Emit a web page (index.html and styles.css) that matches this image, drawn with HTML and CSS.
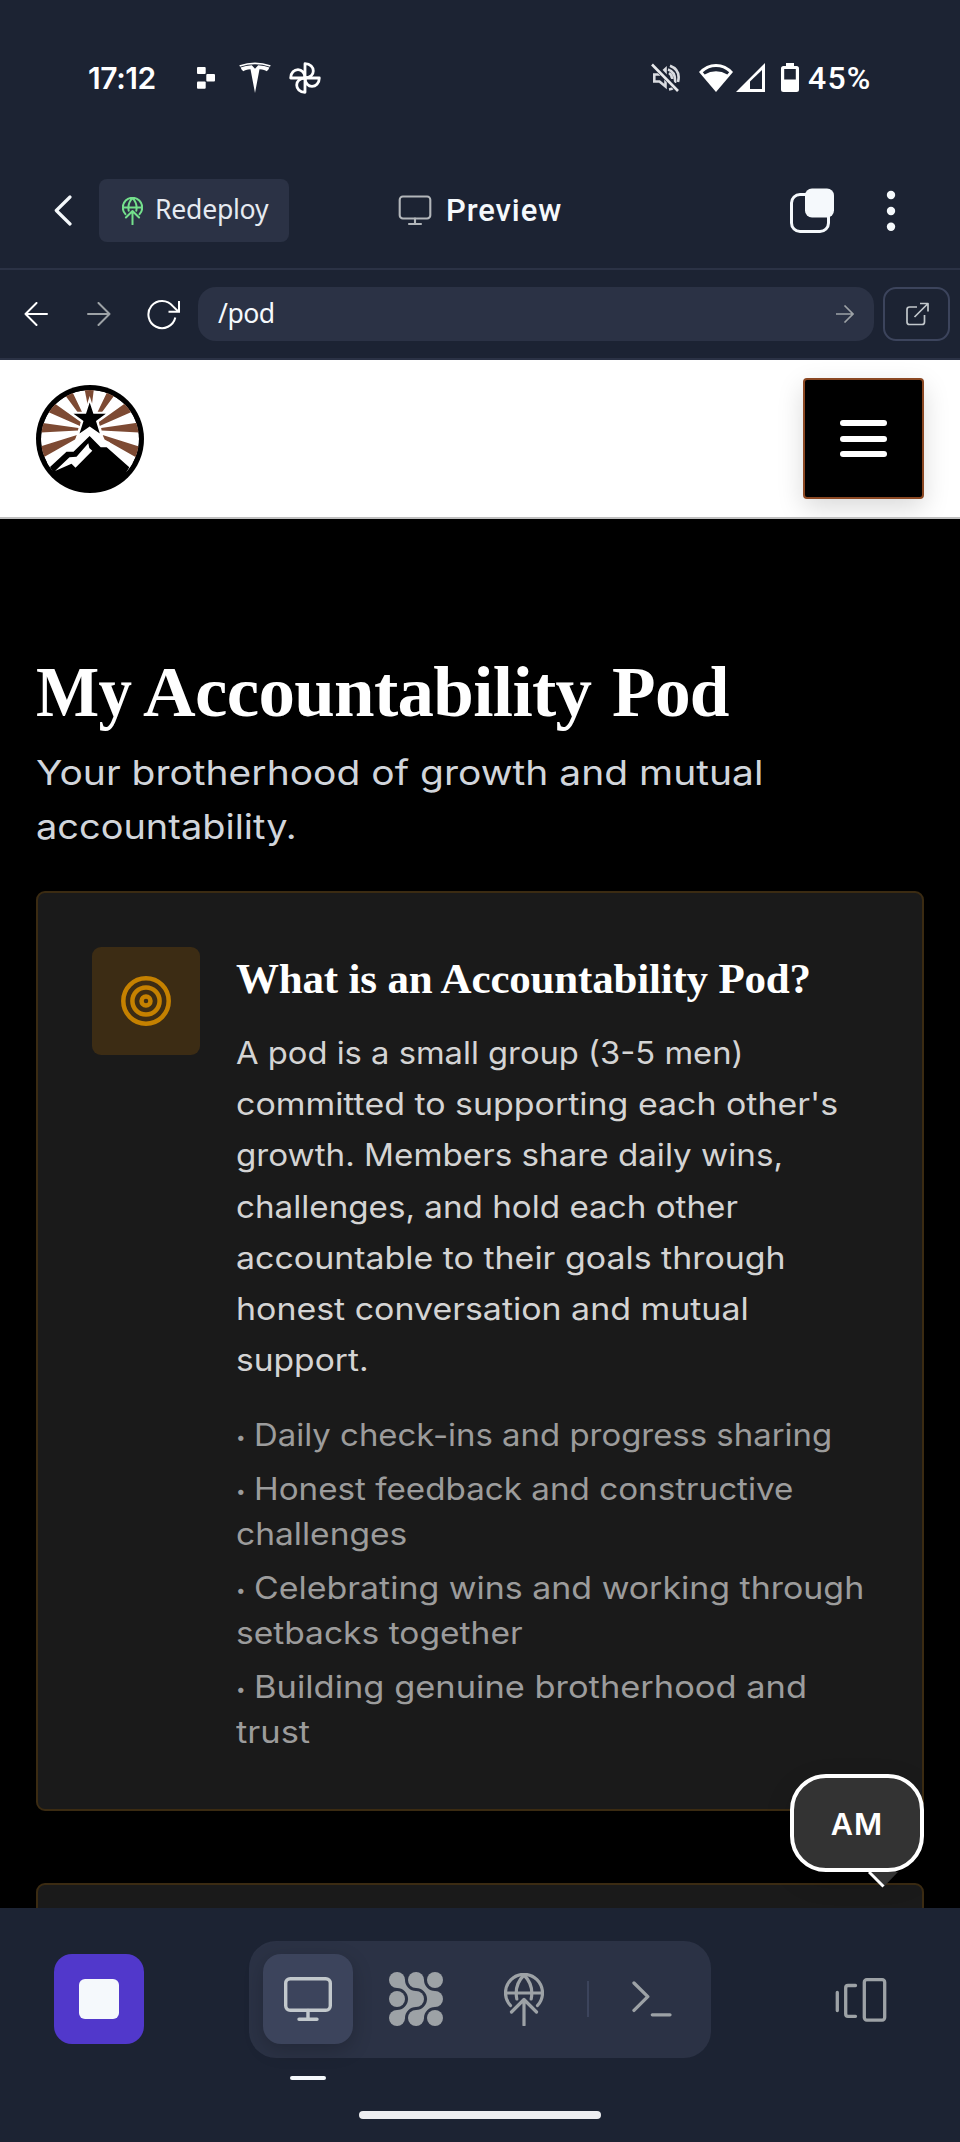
FILE: index.html
```html
<!DOCTYPE html>
<html lang="en">
<head>
<meta charset="utf-8">
<title>Preview</title>
<link rel="stylesheet" href="styles.css">
</head>
<body>
<div class="phone">
  <div class="status">
    <span class="clock">17:12</span>
    <svg class="st-blocks" width="18" height="22" viewBox="0 0 18 22" fill="#fff"><rect width="8.7" height="7" rx="1"/><rect x="9.3" y="7" width="8.7" height="7.4" rx="1"/><rect y="14.4" width="8.7" height="7.4" rx="1"/></svg>
    <svg class="st-tesla" width="32" height="31" viewBox="0 0 32 31" fill="#fff"><path d="M.3 3.2Q16-2.2 31.7 3.200L31 4.700Q16-.2 1 4.700Z"/><path d="M1.600 5.600Q6.500 3.500 12.800 3.300L16 6.800 19.200 3.300Q25.500 3.500 30.400 5.600 29.600 8.300 27.400 9.200 26 7.600 20.500 7.300L16 31 11.500 7.300Q6 7.600 4.600 9.200 2.400 8.300 1.600 5.600Z"/></svg>
    <svg class="st-pin" width="32" height="32" viewBox="0 0 32 32" fill="none" stroke="#fff" stroke-width="2.800" stroke-linejoin="round"><path id="blade" d="M16 16V1.700C21.500 1.700 24.300 5.400 24.300 9 24.300 12.500 21.500 16 16 16Z"/><use href="#blade" transform="rotate(90 16 16)"/><use href="#blade" transform="rotate(180 16 16)"/><use href="#blade" transform="rotate(270 16 16)"/></svg>
    <svg class="st-mute" width="30" height="30" viewBox="0 0 30 30" fill="none" stroke="#d9dbe0" stroke-width="2.600"><path d="M3.300 11.500H8.500L14.500 6V23.500L8.500 18.500H3.300Z"/><path d="M18 10Q21 12 21 16M17 6.500Q25 9 24 20M19 2.800Q30 7 27 19M18 26.500Q21 26 23 24.500"/><path d="M2.500 1.500 28 28" stroke="#1c2333" stroke-width="5.500"/><path d="M1 1.500 27 28" stroke="#e8e9ec" stroke-width="2.600"/></svg>
    <svg class="st-wifi" width="34" height="28" viewBox="0 0 34 28" fill="#fff"><path d="M17 28 0 8Q7 0 17 0T34 8Z"/><path d="M3.800 8.300Q9.500 3 17 3T30.200 8.300L28.300 10.500Q23 7.300 17 7.300T5.700 10.500Z" fill="#1c2333"/></svg>
    <svg class="st-signal" width="29" height="29" viewBox="0 0 29 29"><path d="M29 0V29H0Z" fill="#fff"/><path d="M26 7V26H14V18.500Z" fill="#1c2333"/></svg>
    <svg class="st-batt" width="18" height="29" viewBox="0 0 18 29"><path d="M5 0H13V3H15.500Q18 3 18 5.500V26.500Q18 29 15.500 29H2.500Q0 29 0 26.500V5.500Q0 3 2.500 3H5Z" fill="#fff"/><path d="M3.200 6H14.800V16.500H3.200Z" fill="#1c2333"/></svg>
    <span class="percent">45%</span>
  </div>

  <div class="appbar">
    <svg width="18" height="31" viewBox="0 0 18 31" fill="none" stroke="#f5f9fc" stroke-width="3.200" stroke-linecap="round" stroke-linejoin="round"><path d="M16 2 2.300 15.500 16 29"/></svg>
    <div class="redeploy">
      <svg width="21" height="28" viewBox="0 0 40 53" fill="none" stroke="#74e08c" stroke-width="3.800" stroke-linecap="round" stroke-linejoin="round"><path d="M6.500 32.500A18.500 18.500 0 1 1 33.500 32.500M1.500 20H38.500M12.800 26Q10 12 20 2 30 12 27.200 26M20 26.500V52M7.500 39 20 26.500 32.500 39"/></svg>
      <span>Redeploy</span>
    </div>
    <div class="page-name">
      <svg width="34" height="31" viewBox="0 0 34 31" fill="none" stroke="#b2b6ba" stroke-width="2.100" stroke-linecap="round"><rect x="1.700" y="1.500" width="30.600" height="22" rx="3.200"/><path d="M17 23.500V29M11 29H23"/></svg>
      <span>Preview</span>
    </div>
    <svg class="tabs" width="46" height="46" viewBox="0 0 46 46"><rect x="2.500" y="6.500" width="37" height="37" rx="8.500" fill="none" stroke="#f5f9fc" stroke-width="3"/><rect x="16" y=".5" width="29" height="29" rx="7" fill="#f5f9fc"/></svg>
    <svg class="dots" width="10" height="42" viewBox="0 0 10 42" fill="#f5f9fc"><circle cx="5" cy="5" r="4.200"/><circle cx="5" cy="21" r="4.200"/><circle cx="5" cy="36.800" r="4.200"/></svg>
  </div>

  <div class="urlbar">
    <svg width="24" height="24" viewBox="0 0 24 24" fill="none" stroke="#fff" stroke-width="2" stroke-linecap="round" stroke-linejoin="round"><path d="M23 12H1.500M12.500 1 1.500 12 12.500 23"/></svg>
    <svg class="fwd" width="24" height="24" viewBox="0 0 24 24" fill="none" stroke="#9da2a6" stroke-width="2" stroke-linecap="round" stroke-linejoin="round"><path d="M1 12H22.500M11.500 1 22.500 12 11.500 23"/></svg>
    <svg class="reload" width="33" height="31" viewBox="0 0 33 31" fill="none" stroke="#fff" stroke-width="2"><path d="M28.300 18.500A13.600 13.600 0 1 1 25.800 7.200L31 12.300"/><path d="M32 2V12.800H21.500"/></svg>
    <div class="field">
      <span>/pod</span>
      <svg width="18" height="18" viewBox="0 0 18 18" fill="none" stroke="#9da2a6" stroke-width="1.600"><path d="M0 9H17M8.500.5 17 9 8.500 17.500"/></svg>
    </div>
    <div class="external">
      <svg width="24" height="24" viewBox="0 0 24 24" fill="none" stroke="#c2c8cc" stroke-width="1.700" stroke-linejoin="round"><path d="M12 5H4.500Q2 5 2 7.500V20Q2 22.500 4.500 22.500H17Q19.500 22.500 19.500 20V13M15 1.500H23V9.500M23 1.500 9.500 15"/></svg>
    </div>
  </div>

  <div class="site">
    <header class="site-head">
      <svg width="108" height="108" viewBox="0 0 108 108">
        <defs><clipPath id="disc"><circle cx="54" cy="54" r="49"/></clipPath></defs>
        <circle cx="54" cy="54" r="54"/>
        <g clip-path="url(#disc)">
          <circle cx="54" cy="54" r="49" fill="#fff"/>
          <g fill="#7d4a33">
            <path d="M48.300 3H58L56 19H51.500Z"/>
            <g id="rays"><path d="M26 6 35 4 46 27H41.500ZM11 26.500 18 18 44.700 37 44 41ZM3 47.600 4 37.500 42.500 43 42 45.500ZM3 75 3 62 41 50 39 54.500Z"/></g>
            <use href="#rays" transform="translate(107.600 0) scale(-1 1)"/>
          </g>
          <path d="M10 86 30.500 66.700H37.500L53.600 51 64.700 62.300H70.700L97 86" fill="none" stroke="#fff" stroke-width="11"/>
          <path d="M53.700 17.500 57.400 28.800H69.800L60 36 63.800 48.500 53.700 41.500 43.500 48.500 47.500 36 37.500 28.800H50Z" fill="#000" stroke="#fff" stroke-width="4" paint-order="stroke"/>
          <path d="M53.600 42.500 66 54 60 60 53.600 53 47 59 41 54Z" fill="#fff"/>
        </g>
        <path d="M14 82 30.500 66.700H37.500L53.600 51 64.700 62.300H70.700L93.300 82.300 84 98 54 106 22 96Z"/>
        <path d="M52.300 58.300 53.300 63 56.300 65.800 39.500 82.700 35.500 78.700 19 86 33.500 72.300 40.500 71.700Z" fill="#fff"/>
      </svg>
      <div class="menu"><i></i><i></i><i></i></div>
    </header>

    <main class="content">
      <h1><span class="w1">My</span> <span class="w2">Accountability</span> <span class="w3">Pod</span></h1>
      <p class="lead"><span class="x13">Your brotherhood of growth and mutual</span><br><span class="x10">accountability.</span></p>

      <section class="card">
        <div class="card-icon">
          <svg width="50" height="50" viewBox="0 0 50 50" fill="none" stroke="#c58100" stroke-width="4.500"><circle cx="25" cy="25" r="22.700"/><circle cx="25" cy="25" r="13.600"/><circle cx="25" cy="25" r="4.500"/></svg>
        </div>
        <div class="card-body">
          <h2>What is an Accountability Pod?</h2>
          <p class="about">
            <span class="x7">A pod is a small group (3-5 men)</span><br>
            <span class="x11">committed to supporting each other's</span><br>
            <span class="x9">growth. Members share daily wins,</span><br>
            <span class="x9">challenges, and hold each other</span><br>
            <span class="x11">accountable to their goals through</span><br>
            <span class="x11">honest conversation and mutual</span><br>
            <span class="x10">support.</span>
          </p>
          <ul>
            <li><b>•</b><span class="x8">Daily check-ins and progress sharing</span></li>
            <li><b>•</b><span class="x9">Honest feedback and constructive</span><br><span class="x10">challenges</span></li>
            <li><b>•</b><span class="x11">Celebrating wins and working through</span><br><span class="x10">setbacks together</span></li>
            <li><b>•</b><span class="x12">Building genuine brotherhood and</span><br><span class="x13">trust</span></li>
          </ul>
        </div>
      </section>
      <section class="card next"></section>
    </main>
  </div>

  <div class="dock">
    <div class="dock-row">
      <div class="stop"><i></i></div>
      <div class="tools">
        <div class="tool active">
          <svg width="48" height="44" viewBox="0 0 48 44" fill="none" stroke="#c2c8cc" stroke-width="3.400" stroke-linecap="round"><rect x="1.700" y="1.700" width="44.600" height="31.600" rx="4.500"/><path d="M24 33.500V42M15 42.200H33"/></svg>
        </div>
        <div class="tool">
          <svg width="54" height="54" viewBox="0 0 54 54" fill="#9da2a6"><circle cx="8" cy="8" r="8"/><circle cx="27" cy="8" r="8"/><circle cx="46" cy="8" r="8"/><circle cx="8" cy="27" r="8"/><circle cx="27" cy="27" r="8"/><circle cx="46" cy="27" r="8"/><circle cx="8" cy="46" r="8"/><circle cx="27" cy="46" r="8"/><circle cx="46" cy="46" r="8"/><path id="link" d="M8 0L16 8A11 11 0 0 0 27 19L19 27A11 11 0 0 0 8 16Z"/><use href="#link" x="19"/><g transform="translate(0 54) scale(1 -1)"><use href="#link"/><use href="#link" x="19"/></g></svg>
        </div>
        <div class="tool">
          <svg width="40" height="53" viewBox="0 0 40 53" fill="none" stroke="#9da2a6" stroke-width="3.200" stroke-linecap="round" stroke-linejoin="round"><path d="M6.500 32.500A18.500 18.500 0 1 1 33.500 32.500M1.500 20H38.500M12.800 26Q10 12 20 2 30 12 27.200 26M20 26.500V52M7.500 39 20 26.500 32.500 39"/></svg>
        </div>
        <div class="rule"></div>
        <div class="tool">
          <svg width="40" height="36" viewBox="0 0 40 36" fill="none" stroke="#9da2a6" stroke-width="3.300" stroke-linecap="round" stroke-linejoin="round"><path d="M2 2 15.800 15.700 2 29.400M20.300 33.800H38"/></svg>
        </div>
      </div>
      <svg class="panes" width="52" height="44" viewBox="0 0 52 44" fill="none" stroke="#9da2a6" stroke-width="3.300" stroke-linecap="round"><path d="M2.300 14.500V32.500M20.500 7.500H13Q10.700 7.500 10.700 9.800V36Q10.700 38.300 13 38.300H20.500"/><rect x="29.300" y="1.700" width="20.400" height="40.400" rx="2.500"/></svg>
    </div>
    <div class="indicator"></div>
    <div class="home"></div>
  </div>

  <div class="bubble">AM
    <svg width="32" height="18" viewBox="0 0 32 18"><path d="M2 0 16 14.500 30 0Z" fill="#333"/><path d="M1 0 15.500 14.500" stroke="#fff" stroke-width="3"/></svg>
  </div>
</div>
</body>
</html>
```
FILE: styles.css
```css
* { box-sizing: border-box; margin: 0; padding: 0; }
body { background: #1c2333; }
svg { display: block; flex: none; }

.phone {
  position: relative;
  display: flex;
  flex-direction: column;
  width: 960px;
  height: 2142px;
  overflow: hidden;
  background: #1c2333;
  color: #f5f9fc;
  font-family: Inter, sans-serif;
}

/* System status row */
.status { display: flex; align-items: center; height: 153px; padding: 2px 0 0 88px; }
.clock { width: 109px; font-size: 30px; font-weight: 600; letter-spacing: -.4px; color: #fff; }
.st-tesla { margin-left: 24px; }
.st-pin { margin-left: 18px; }
.st-mute { margin-left: 330px; }
.st-wifi { margin-left: 18px; }
.st-signal { margin-left: 3px; }
.st-batt { margin-left: 16px; }
.percent { margin-left: 9px; font: 500 32px Roboto, sans-serif; letter-spacing: 1.2px; color: #fff; }

/* App bar */
.appbar {
  display: flex;
  align-items: center;
  height: 117px;
  padding: 0 64px 0 54px;
  border-bottom: 2px solid #2b3245;
}
.redeploy {
  display: flex;
  align-items: center;
  gap: 12px;
  width: 190px;
  height: 63px;
  margin-left: 27px;
  padding-left: 23px;
  border-radius: 8px;
  background: #2b3245;
  color: #e6eaf1;
  font: 26.600px "Noto Sans", sans-serif;
  letter-spacing: -.25px;
}
.redeploy span { padding-bottom: 3px; }
.page-name {
  display: flex;
  align-items: center;
  gap: 14px;
  margin-left: 109px;
  font: 500 31px Roboto, sans-serif;
  letter-spacing: .9px;
}
.tabs { margin-left: auto; }
.dots { margin-left: 51px; }

/* Address row */
.urlbar {
  display: flex;
  align-items: center;
  height: 90px;
  padding-left: 24px;
  border-bottom: 2px solid #2b3245;
}
.fwd { margin-left: 39px; }
.reload { margin-left: 36px; }
.field {
  display: flex;
  align-items: center;
  justify-content: space-between;
  width: 676px;
  height: 54px;
  margin-left: 18px;
  padding: 0 20px;
  border-radius: 18px;
  background: #2b3245;
  font: 26.600px "Noto Sans", sans-serif;
  letter-spacing: -.5px;
}
.field span { padding-bottom: 2px; }
.external {
  display: flex;
  align-items: center;
  justify-content: center;
  width: 67px;
  height: 54px;
  margin-left: 9px;
  border: 2px solid #3c445c;
  border-radius: 13px;
}

/* Previewed site */
.site { height: 1548px; overflow: hidden; background: #000; }
.site-head {
  display: flex;
  align-items: center;
  justify-content: space-between;
  height: 159px;
  padding: 0 36px;
  background: #fff;
  border-bottom: 2px solid #bfbfbf;
  overflow: hidden;
}
.menu {
  display: flex;
  flex-direction: column;
  align-items: center;
  justify-content: center;
  gap: 9.700px;
  width: 121px;
  height: 121px;
  border: 2px solid #8b4823;
  border-radius: 4px;
  background: #000;
  box-shadow: 0 9px 27px rgba(0, 0, 0, .15);
}
.menu i { width: 47px; height: 6px; border-radius: 3px; background: #fff; }

.content { padding: 133px 36px 0; }
h1, h2 { font-family: "Liberation Serif", serif; font-weight: 700; color: #fff; white-space: nowrap; }
h1 { font-size: 72px; line-height: 81px; letter-spacing: -.67px; }
h1 span, .lead span, .about span, li span { display: inline-block; transform-origin: 0 50%; }
.w1 { width: 90px; transform: scaleX(.93); }
.w2 { width: 451px; transform: scaleX(1.013); }
.w3 { transform: scaleX(.99); }
.lead { margin-top: 13px; font-size: 34.500px; line-height: 54px; color: #d1d5db; white-space: nowrap; }
.card {
  display: flex;
  gap: 36px;
  margin-top: 37px;
  padding: 54px 34px 54.500px 54px;
  border: 2px solid #3b2b12;
  border-radius: 9px;
  background: #1a1a1a;
}
.card.next { height: 200px; margin-top: 72px; }
.card-icon {
  display: flex;
  align-items: center;
  justify-content: center;
  flex: none;
  width: 108px;
  height: 108px;
  border-radius: 9px;
  background: #3c2c14;
}
.card-body { flex: 1; min-width: 0; white-space: nowrap; }
h2 { font-size: 43px; line-height: 63px; letter-spacing: -.19px; }
.about { margin-top: 17px; font-size: 30.500px; line-height: 51.200px; color: #d4d4d4; }
ul { display: flex; flex-direction: column; gap: 9px; margin-top: 27px; list-style: none; }
li { font-size: 30.500px; line-height: 45px; color: #9c9c9c; }
li b { display: inline-block; width: 18px; font-size: 17px; line-height: 1; font-weight: 400; vertical-align: 3px; }

/* Widened set of the body copy */
.x7 { transform: scaleX(1.073); }
.x8 { transform: scaleX(1.079); }
.x9 { transform: scaleX(1.088); }
.x10 { transform: scaleX(1.1); }
.x11 { transform: scaleX(1.112); }
.x12 { transform: scaleX(1.129); }
.x13 { transform: scaleX(1.13); }

/* Bottom dock */
.dock { height: 234px; padding-top: 33px; background: #1c2333; }
.dock-row { display: flex; align-items: center; padding-left: 54px; height: 117px; }
.stop {
  display: flex;
  align-items: center;
  justify-content: center;
  width: 90px;
  height: 90px;
  margin-bottom: 1px;
  border-radius: 18px;
  background: #5138cb;
}
.stop i { width: 40px; height: 40px; border-radius: 6px; background: #f5f9fc; }
.tools {
  display: flex;
  align-items: center;
  gap: 18px;
  width: 462px;
  height: 117px;
  margin-left: 105px;
  padding: 0 14px 1px;
  border-radius: 27px;
  background: #2b3245;
}
.tool {
  display: flex;
  align-items: center;
  justify-content: center;
  width: 90px;
  height: 90px;
  border-radius: 18px;
}
.tool.active { background: #3c445c; box-shadow: 0 6px 20px rgba(0, 0, 0, .2); }
.rule { width: 2px; height: 36px; background: #3c445c; }
.panes { margin-left: 124px; }
.indicator { width: 36px; height: 4px; margin: 18px 0 0 290px; border-radius: 2px; background: #f5f9fc; }
.home { width: 242px; height: 8px; margin: 31px 0 0 359px; border-radius: 4px; background: #edeef1; }

/* Floating chat bubble */
.bubble {
  position: absolute;
  left: 790px;
  top: 1774px;
  display: flex;
  align-items: center;
  justify-content: center;
  width: 134px;
  height: 98px;
  border: 4px solid #fff;
  border-radius: 36px;
  background: #333;
  color: #fff;
  font-size: 30.500px;
  font-weight: 600;
  letter-spacing: 1.200px;
  box-shadow: 0 9px 27px rgba(0, 0, 0, .15);
}
.bubble svg { position: absolute; left: 74px; top: 94px; }
```
